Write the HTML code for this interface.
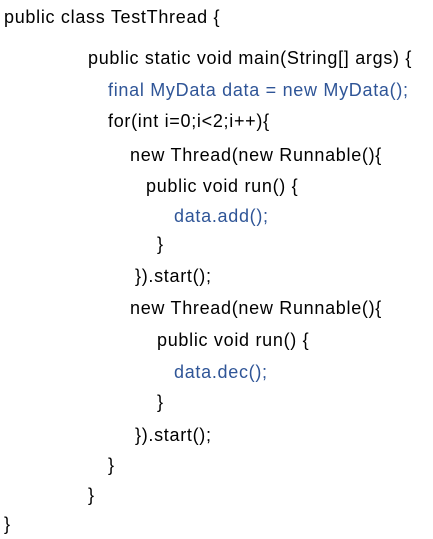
<!DOCTYPE html>
<html><head><meta charset="utf-8"><style>
html,body{margin:0;padding:0;background:#fff;width:433px;height:539px;overflow:hidden}
div{position:absolute;font-family:"Liberation Sans","Noto Sans CJK SC",sans-serif;font-size:18px;letter-spacing:0.7px;color:#000;white-space:pre;line-height:20px}
.b{color:#2f5597}
</style></head><body>
<div style="left:4px;top:7px">public class TestThread {</div>
<div style="left:88px;top:48px">public static void main(String[] args) {</div>
<div class="b" style="left:108px;top:80px">final MyData data = new MyData();</div>
<div style="left:108px;top:111px">for(int i=0;i&lt;2;i++){</div>
<div style="left:130px;top:145px">new Thread(new Runnable(){</div>
<div style="left:146px;top:176px">public void run() {</div>
<div class="b" style="left:174px;top:206px">data.add();</div>
<div style="left:157px;top:234px">}</div>
<div style="left:135px;top:266px">}).start();</div>
<div style="left:130px;top:298px">new Thread(new Runnable(){</div>
<div style="left:157px;top:330px">public void run() {</div>
<div class="b" style="left:174px;top:362px">data.dec();</div>
<div style="left:157px;top:392px">}</div>
<div style="left:135px;top:425px">}).start();</div>
<div style="left:108px;top:455px">}</div>
<div style="left:88px;top:485px">}</div>
<div style="left:4px;top:514px">}</div>
</body></html>
